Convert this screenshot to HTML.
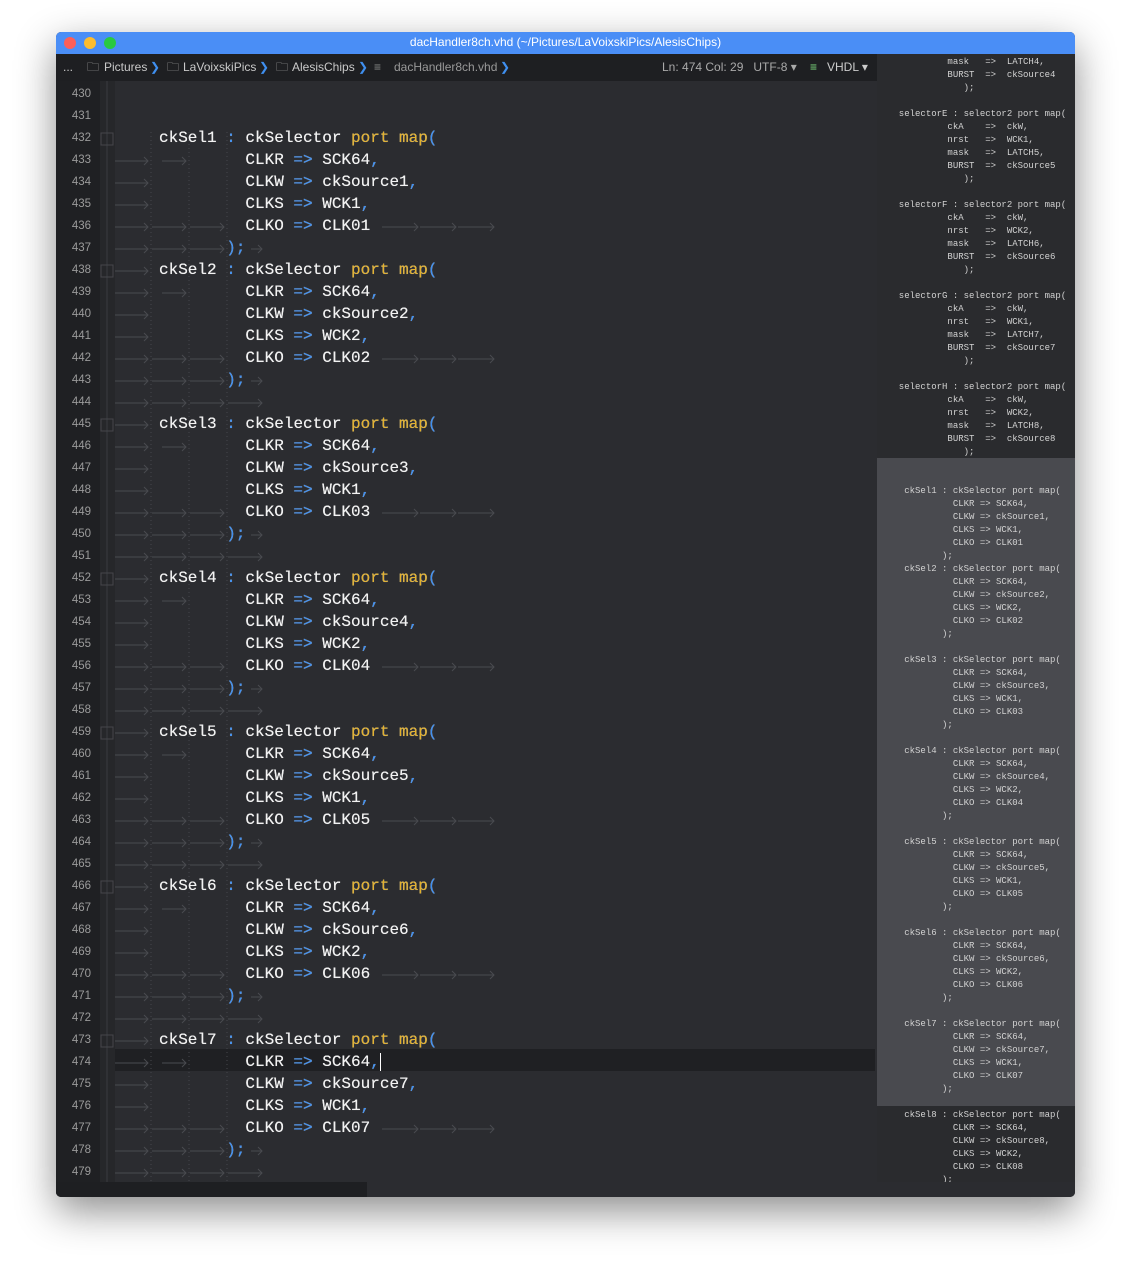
<!DOCTYPE html>
<html><head><meta charset="utf-8"><style>
*{margin:0;padding:0;box-sizing:border-box}
body{width:1131px;height:1278px;background:#fff;position:relative;overflow:hidden;font-family:"Liberation Sans",sans-serif}
.win{position:absolute;left:56px;top:32px;width:1019px;height:1165px;background:#2b2c30;box-shadow:0 14px 40px rgba(0,0,0,.45);border-radius:5px;overflow:hidden}
.title{position:absolute;left:0;top:0;width:1019px;height:22px;background:#4a8ef6;color:#fff;font-size:12px;text-align:center;line-height:21px}
.dot{position:absolute;top:5px;width:12px;height:12px;border-radius:50%}
.tool{position:absolute;left:0;top:22px;width:821px;height:27px;background:#1e1f22;color:#c9c9c9;font-size:12px;line-height:27px}
.tool span{position:absolute;top:0;white-space:nowrap}
.gut{position:absolute;left:0;top:49px;width:44px;height:1101px;background:#1f2023}
.fold{position:absolute;left:44px;top:49px;width:15px;height:1101px;background:#26272a}
.ln{position:absolute;left:0;width:35px;text-align:right;color:#9b9b9b;font-size:11.5px;font-family:"Liberation Sans",sans-serif}
.code{position:absolute;font-family:"Liberation Mono",monospace;font-size:16px;color:#f2f2f2;white-space:pre;line-height:22px;text-shadow:0 0 0.4px #fff}
.k{color:#e3b12d}.b{color:#3f8ff0}
.mm{position:absolute;left:821px;top:22px;width:198px;height:1128px;background:#2a2b2e;overflow:hidden}
.mm pre{position:absolute;left:-43px;font-family:"Liberation Mono",monospace;font-size:9px;line-height:13px;color:#d2d2d2}
.hl{position:absolute;left:0;top:404px;width:198px;height:648px;background:#494a4f}
.cur{position:absolute;left:59px;top:1017px;width:760px;height:22px;background:#1f2023}
.sb{position:absolute;left:0;top:1150px;width:1019px;height:15px;background:#2b2c30}
.sbt{position:absolute;left:0;top:1150px;width:311px;height:15px;background:#1e1f22}
</style></head><body>
<div class="win">
<div class="title">dacHandler8ch.vhd (~/Pictures/LaVoixskiPics/AlesisChips)
<div class="dot" style="left:8px;background:#fc5f57"></div><div class="dot" style="left:28px;background:#fdbc2e"></div><div class="dot" style="left:48px;background:#29c941"></div></div>
<div class="tool">
<span style="left:7px">...</span>
<span style="left:31px;color:#aaa">&#128448;</span>
<span style="left:48px">Pictures</span><span style="left:94px;color:#3f8ff0">&#10095;</span>
<span style="left:111px;color:#aaa">&#128448;</span>
<span style="left:127px">LaVoixskiPics</span><span style="left:203px;color:#3f8ff0">&#10095;</span>
<span style="left:220px;color:#aaa">&#128448;</span>
<span style="left:236px">AlesisChips</span><span style="left:302px;color:#3f8ff0">&#10095;</span>
<span style="left:318px;color:#888">&#8801;</span>
<span style="left:338px;color:#999">dacHandler8ch.vhd</span><span style="left:444px;color:#3f8ff0">&#10095;</span>
<span style="left:606px;color:#aaa">Ln: 474 Col: 29&nbsp;&nbsp; UTF-8 &#9662;</span>
<span style="left:754px;color:#7fdc7f">&#8801;</span>
<span style="left:771px;color:#ccc">VHDL &#9662;</span>
</div>
<div class="gut"></div><div class="fold"></div>
<div class="cur"></div>
<svg id="arr" style="position:absolute;left:0;top:0" width="821" height="1150"></svg>
<div id="lns"></div>
<div class="code" style="left:103px;top:73px">
ckSel1 <span class="b">:</span> ckSelector <span class="k">port map</span><span class="b">(</span>
         CLKR <span class="b">=&gt;</span> SCK64<span class="b">,</span>
         CLKW <span class="b">=&gt;</span> ckSource1<span class="b">,</span>
         CLKS <span class="b">=&gt;</span> WCK1<span class="b">,</span>
         CLKO <span class="b">=&gt;</span> CLK01
       <span class="b">);</span>
ckSel2 <span class="b">:</span> ckSelector <span class="k">port map</span><span class="b">(</span>
         CLKR <span class="b">=&gt;</span> SCK64<span class="b">,</span>
         CLKW <span class="b">=&gt;</span> ckSource2<span class="b">,</span>
         CLKS <span class="b">=&gt;</span> WCK2<span class="b">,</span>
         CLKO <span class="b">=&gt;</span> CLK02
       <span class="b">);</span>

ckSel3 <span class="b">:</span> ckSelector <span class="k">port map</span><span class="b">(</span>
         CLKR <span class="b">=&gt;</span> SCK64<span class="b">,</span>
         CLKW <span class="b">=&gt;</span> ckSource3<span class="b">,</span>
         CLKS <span class="b">=&gt;</span> WCK1<span class="b">,</span>
         CLKO <span class="b">=&gt;</span> CLK03
       <span class="b">);</span>

ckSel4 <span class="b">:</span> ckSelector <span class="k">port map</span><span class="b">(</span>
         CLKR <span class="b">=&gt;</span> SCK64<span class="b">,</span>
         CLKW <span class="b">=&gt;</span> ckSource4<span class="b">,</span>
         CLKS <span class="b">=&gt;</span> WCK2<span class="b">,</span>
         CLKO <span class="b">=&gt;</span> CLK04
       <span class="b">);</span>

ckSel5 <span class="b">:</span> ckSelector <span class="k">port map</span><span class="b">(</span>
         CLKR <span class="b">=&gt;</span> SCK64<span class="b">,</span>
         CLKW <span class="b">=&gt;</span> ckSource5<span class="b">,</span>
         CLKS <span class="b">=&gt;</span> WCK1<span class="b">,</span>
         CLKO <span class="b">=&gt;</span> CLK05
       <span class="b">);</span>

ckSel6 <span class="b">:</span> ckSelector <span class="k">port map</span><span class="b">(</span>
         CLKR <span class="b">=&gt;</span> SCK64<span class="b">,</span>
         CLKW <span class="b">=&gt;</span> ckSource6<span class="b">,</span>
         CLKS <span class="b">=&gt;</span> WCK2<span class="b">,</span>
         CLKO <span class="b">=&gt;</span> CLK06
       <span class="b">);</span>

ckSel7 <span class="b">:</span> ckSelector <span class="k">port map</span><span class="b">(</span>
         CLKR <span class="b">=&gt;</span> SCK64<span class="b">,</span><span style="border-right:1px solid #fff"></span>
         CLKW <span class="b">=&gt;</span> ckSource7<span class="b">,</span>
         CLKS <span class="b">=&gt;</span> WCK1<span class="b">,</span>
         CLKO <span class="b">=&gt;</span> CLK07
       <span class="b">);</span>
</div>
<div class="mm">
<div class="hl"></div>
<pre style="top:2px">                     mask   =&gt;  LATCH4,
                     BURST  =&gt;  ckSource4
                        );

            selectorE : selector2 port map(
                     ckA    =&gt;  ckW,
                     nrst   =&gt;  WCK1,
                     mask   =&gt;  LATCH5,
                     BURST  =&gt;  ckSource5
                        );

            selectorF : selector2 port map(
                     ckA    =&gt;  ckW,
                     nrst   =&gt;  WCK2,
                     mask   =&gt;  LATCH6,
                     BURST  =&gt;  ckSource6
                        );

            selectorG : selector2 port map(
                     ckA    =&gt;  ckW,
                     nrst   =&gt;  WCK1,
                     mask   =&gt;  LATCH7,
                     BURST  =&gt;  ckSource7
                        );

            selectorH : selector2 port map(
                     ckA    =&gt;  ckW,
                     nrst   =&gt;  WCK2,
                     mask   =&gt;  LATCH8,
                     BURST  =&gt;  ckSource8
                        );


             ckSel1 : ckSelector port map(
                      CLKR =&gt; SCK64,
                      CLKW =&gt; ckSource1,
                      CLKS =&gt; WCK1,
                      CLKO =&gt; CLK01
                    );
             ckSel2 : ckSelector port map(
                      CLKR =&gt; SCK64,
                      CLKW =&gt; ckSource2,
                      CLKS =&gt; WCK2,
                      CLKO =&gt; CLK02
                    );

             ckSel3 : ckSelector port map(
                      CLKR =&gt; SCK64,
                      CLKW =&gt; ckSource3,
                      CLKS =&gt; WCK1,
                      CLKO =&gt; CLK03
                    );

             ckSel4 : ckSelector port map(
                      CLKR =&gt; SCK64,
                      CLKW =&gt; ckSource4,
                      CLKS =&gt; WCK2,
                      CLKO =&gt; CLK04
                    );

             ckSel5 : ckSelector port map(
                      CLKR =&gt; SCK64,
                      CLKW =&gt; ckSource5,
                      CLKS =&gt; WCK1,
                      CLKO =&gt; CLK05
                    );

             ckSel6 : ckSelector port map(
                      CLKR =&gt; SCK64,
                      CLKW =&gt; ckSource6,
                      CLKS =&gt; WCK2,
                      CLKO =&gt; CLK06
                    );

             ckSel7 : ckSelector port map(
                      CLKR =&gt; SCK64,
                      CLKW =&gt; ckSource7,
                      CLKS =&gt; WCK1,
                      CLKO =&gt; CLK07
                    );

             ckSel8 : ckSelector port map(
                      CLKR =&gt; SCK64,
                      CLKW =&gt; ckSource8,
                      CLKS =&gt; WCK2,
                      CLKO =&gt; CLK08
                    );
</pre>
</div>
<div class="sb"></div><div class="sbt"></div>
</div>
<script>
var lns=document.getElementById('lns'),h='';
for(var n=430;n<=479;n++){h+='<div class="ln" style="top:'+(56+(n-430)*22)+'px">'+n+'</div>';}
lns.innerHTML=h;
var s='',col='#4a4b50';
function ar(x1,x2,y){s+='<line x1="'+x1+'" y1="'+y+'" x2="'+x2+'" y2="'+y+'" stroke="'+col+'" stroke-width="1"/><polyline points="'+(x2-4)+','+(y-4)+' '+x2+','+y+' '+(x2-4)+','+(y+4)+'" fill="none" stroke="'+col+'"/>';}
s+='<line x1="51" y1="49" x2="51" y2="1150" stroke="#3a3b40"/>';
[95,133,171].forEach(function(x){s+='<line x1="'+x+'" y1="100" x2="'+x+'" y2="1150" stroke="#45464b" stroke-dasharray="1,3"/>';});
for(var n=430;n<=479;n++){var y=63+(n-430)*22;
 var blk=[432,438,445,452,459,466,473];var off=-1;blk.forEach(function(b){if(n>=b&&n<b+6)off=n-b;});
 if(off==-1){if(n>=437)ar(59,92,y),ar(96,130,y),ar(134,168,y),ar(172,206,y);continue;}
 if(off==0){if(n>=438)ar(59,92,y);s+='<rect x="45" y="'+(y-6)+'" width="12" height="12" fill="none" stroke="#45464b"/>';}
 else if(off>=1&&off<=3){ar(59,92,y);if(off==1)ar(106,130,y);}
 else if(off==4){ar(59,92,y);ar(96,130,y);ar(134,168,y);ar(326,362,y);ar(364,400,y);ar(402,438,y);}
 else if(off==5){ar(59,92,y);ar(96,130,y);ar(134,168,y);ar(195,206,y);}
}
document.getElementById('arr').innerHTML=s;
</script>
</body></html>
